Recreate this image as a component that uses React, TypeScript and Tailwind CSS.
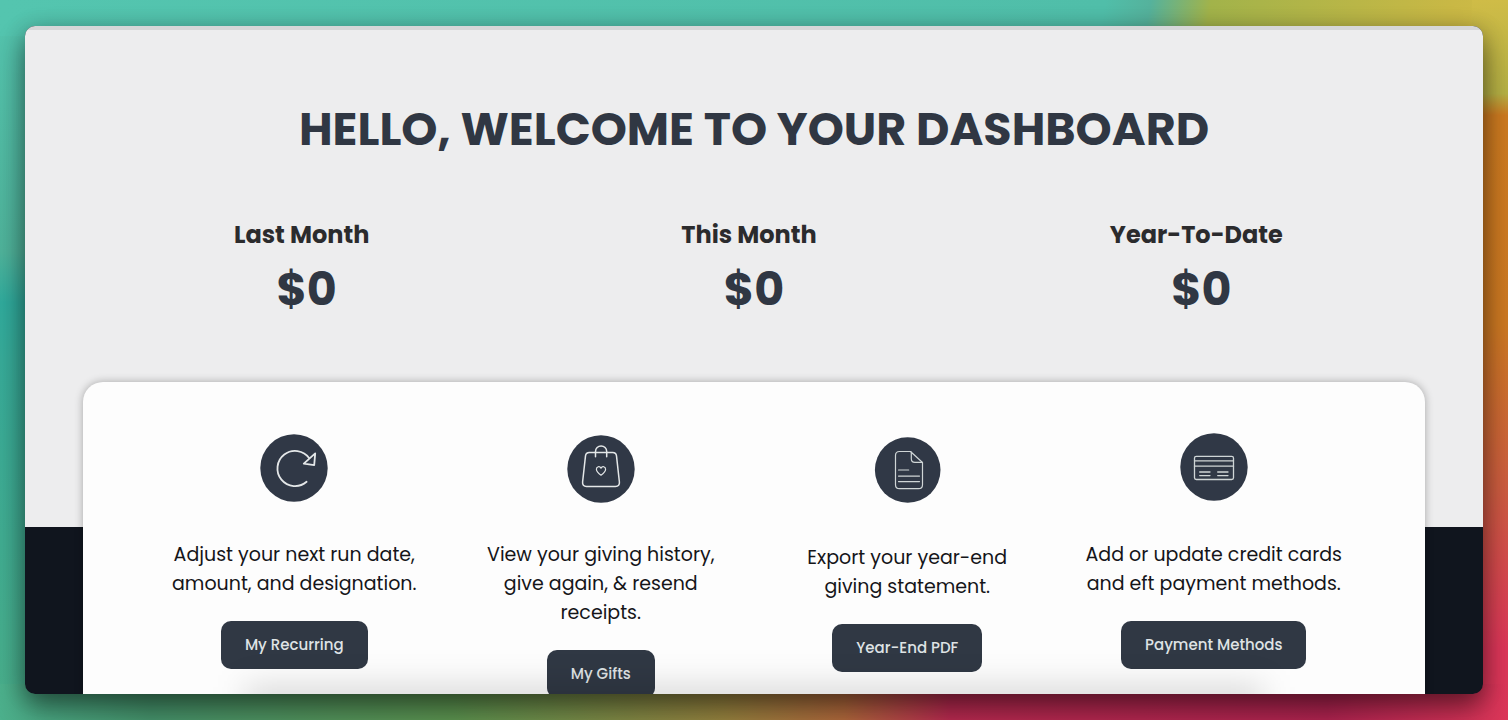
import type { ReactNode } from "react";

const stats = [
    { label: "Last Month", value: "$0" },
    { label: "This Month", value: "$0" },
    { label: "Year-To-Date", value: "$0" },
];

const RecurringIcon = () => (
    <svg width="68" height="71" viewBox="0 0 68 71" fill="none" stroke="#e4e7e8" strokeLinecap="round" strokeLinejoin="round" aria-hidden="true">
        <circle cx="34" cy="34" r="33.7" fill="#303846" stroke="none" />
        <path d="M46.6 47.8A17.6 17.6 0 1 1 49.3 24.2" strokeWidth="1.8" />
        <path d="M55.2 19.3 43.8 29.6l10.4 1.6Z" fill="#303846" strokeWidth="1.8" />
    </svg>
);

const GiftsIcon = () => (
    <svg width="68" height="71" viewBox="0 0 68 71" fill="none" stroke="#e4e7e8" strokeLinecap="round" strokeLinejoin="round" aria-hidden="true">
        <circle cx="34" cy="35" r="33.7" fill="#303846" stroke="none" />
        <path d="M22.3 18.5h23.4c2.3 0 3.5 1.1 3.8 3.3l2.9 26.2c.3 2.8-1.1 4.4-3.9 4.4H19.5c-2.8 0-4.2-1.6-3.9-4.4l2.9-26.2c.3-2.2 1.5-3.3 3.8-3.3Z" strokeWidth="1.5" />
        <path d="M28.5 22.8v-5.3a5.6 5.6 0 0 1 11.2 0v5.3" strokeWidth="1.5" />
        <path d="M34 41.2c-2.6-1.8-4.6-3.6-4.6-5.9 0-3 3.4-3.5 4.6-1.1 1.2-2.4 4.6-1.9 4.6 1.1 0 2.3-2 4.1-4.6 5.9Z" strokeWidth="1.2" />
    </svg>
);

const StatementIcon = () => (
    <svg width="68" height="74" viewBox="0 0 68 74" fill="none" stroke="#cfd5d6" strokeLinecap="round" strokeLinejoin="round" aria-hidden="true">
        <circle cx="34.7" cy="36" r="32.8" fill="#303846" stroke="none" />
        <path d="M37.5 17.5H26.5c-2.5 0-4 1.5-4 4v29.2c0 2.5 1.5 4 4 4h19c2.5 0 4-1.5 4-4V28.5Z" strokeWidth="1.2" />
        <path d="M38.3 18v6.8c0 2.4 1.3 3.6 3.6 3.6h7.3" strokeWidth="1.2" />
        <path d="M25.5 36h10.2M25.5 42.1h21M25.5 47.6h21" strokeWidth="1.2" />
    </svg>
);

const CardIcon = () => (
    <svg className="overflow-visible" width="68" height="71" viewBox="0 0 68 71" fill="none" stroke="#cfd5d6" strokeLinecap="round" strokeLinejoin="round" aria-hidden="true">
        <circle cx="34" cy="33" r="33.7" fill="#303846" stroke="none" />
        <rect x="14.5" y="22.3" width="39" height="23.2" rx="1.8" strokeWidth="1.3" />
        <path d="M14.5 26.8h39M14.5 32.2h39" strokeWidth="1.3" />
        <path d="M19.7 38h10.3M19.7 41.6h10.3M37.7 38H48M37.7 41.6H48" strokeWidth="1.3" />
    </svg>
);

type Action = { icon: ReactNode; text: string; button: string };

const actions: Action[] = [
    { icon: <RecurringIcon />, text: "Adjust your next run date,\namount, and designation.", button: "My Recurring" },
    { icon: <GiftsIcon />, text: "View your giving history,\ngive again, & resend\nreceipts.", button: "My Gifts" },
    { icon: <StatementIcon />, text: "Export your year-end\ngiving statement.", button: "Year-End PDF" },
    { icon: <CardIcon />, text: "Add or update credit cards\nand eft payment methods.", button: "Payment Methods" },
];

// one gradient per side of the frame: bottom, right, top, then left as the base
const backdrop =
    "bg-[linear-gradient(90deg,#4cb08c_0%,#46946c_10%,#5c9450_30%,#97833f_48%,#b0683c_56%,#b82a50_63%,#b02450_88%,#dc3659_100%),linear-gradient(180deg,#cfbc47_0%,#b5b044_13%,#cc7a20_16%,#cb7822_45%,#cc5c40_68%,#dc3659_90%),linear-gradient(100deg,#54c5af_0%,#50bea9_73%,#55b29c_76%,#a2b34a_80%,#c9b845_96%,#cfbc47_100%),linear-gradient(180deg,#54c5af_0%,#4fb29a_35%,#30aa9c_42%,#37aa98_50%,#4aae8a_100%)] bg-[size:100%_36px,36px_100%,100%_36px,100%_100%] bg-[position:bottom,right,top,left] bg-no-repeat";

const App = () => (
    <div className={`h-screen px-[25px] py-[26px] overflow-hidden font-[Poppins,Inter,sans-serif] ${backdrop}`}>
        <main className="h-full rounded-[10px] shadow-[0_14px_28px_rgba(0,0,0,0.45),0_2px_22px_rgba(0,0,0,0.2)]">
            <div className="relative h-full overflow-hidden rounded-[10px] bg-[#10151e]">
                <div className="h-1 bg-[#d6d7d8]" />
                <section className="bg-[#ededee] pt-[70px] pb-[209px] px-[58px] text-center text-[#303743]">
                    <h1 className="text-[46px] leading-[58px] font-bold">HELLO, WELCOME TO YOUR DASHBOARD</h1>
                    <div className="mt-[60px] grid grid-cols-3">
                        {stats.map((s) => (
                            <div key={s.label}>
                                <h2 className="pr-2.5 text-2xl leading-[34px] font-bold text-[#2b2b2d]">{s.label}</h2>
                                <p className="mt-2 text-[46px] leading-[58px] font-bold">{s.value}</p>
                            </div>
                        ))}
                    </div>
                </section>

                <section className="relative mx-[58px] -mt-[145px] grid grid-cols-4 min-h-[400px] px-[58px] pt-[52px] rounded-t-[20px] bg-[#fdfdfd] shadow-[0_0_8px_rgba(0,0,0,0.3)]">
                    {actions.map((a) => (
                        <div key={a.button} className="flex flex-col items-center text-center">
                            {a.icon}
                            <p className="mt-[35px] whitespace-pre-line text-[19px] leading-[29px] text-[#151519]">{a.text}</p>
                            <button type="button" className="mt-[23px] h-12 px-6 rounded-[10px] bg-[#303844] text-[15px] font-medium text-[#dfe3e5]">
                                {a.button}
                            </button>
                        </div>
                    ))}
                </section>

                {/* soft shade along the bottom edge */}
                <div className="absolute inset-x-[220px] -bottom-6 h-8 bg-black/15 blur-[16px] pointer-events-none" />
            </div>
        </main>
    </div>
);

export default App;
